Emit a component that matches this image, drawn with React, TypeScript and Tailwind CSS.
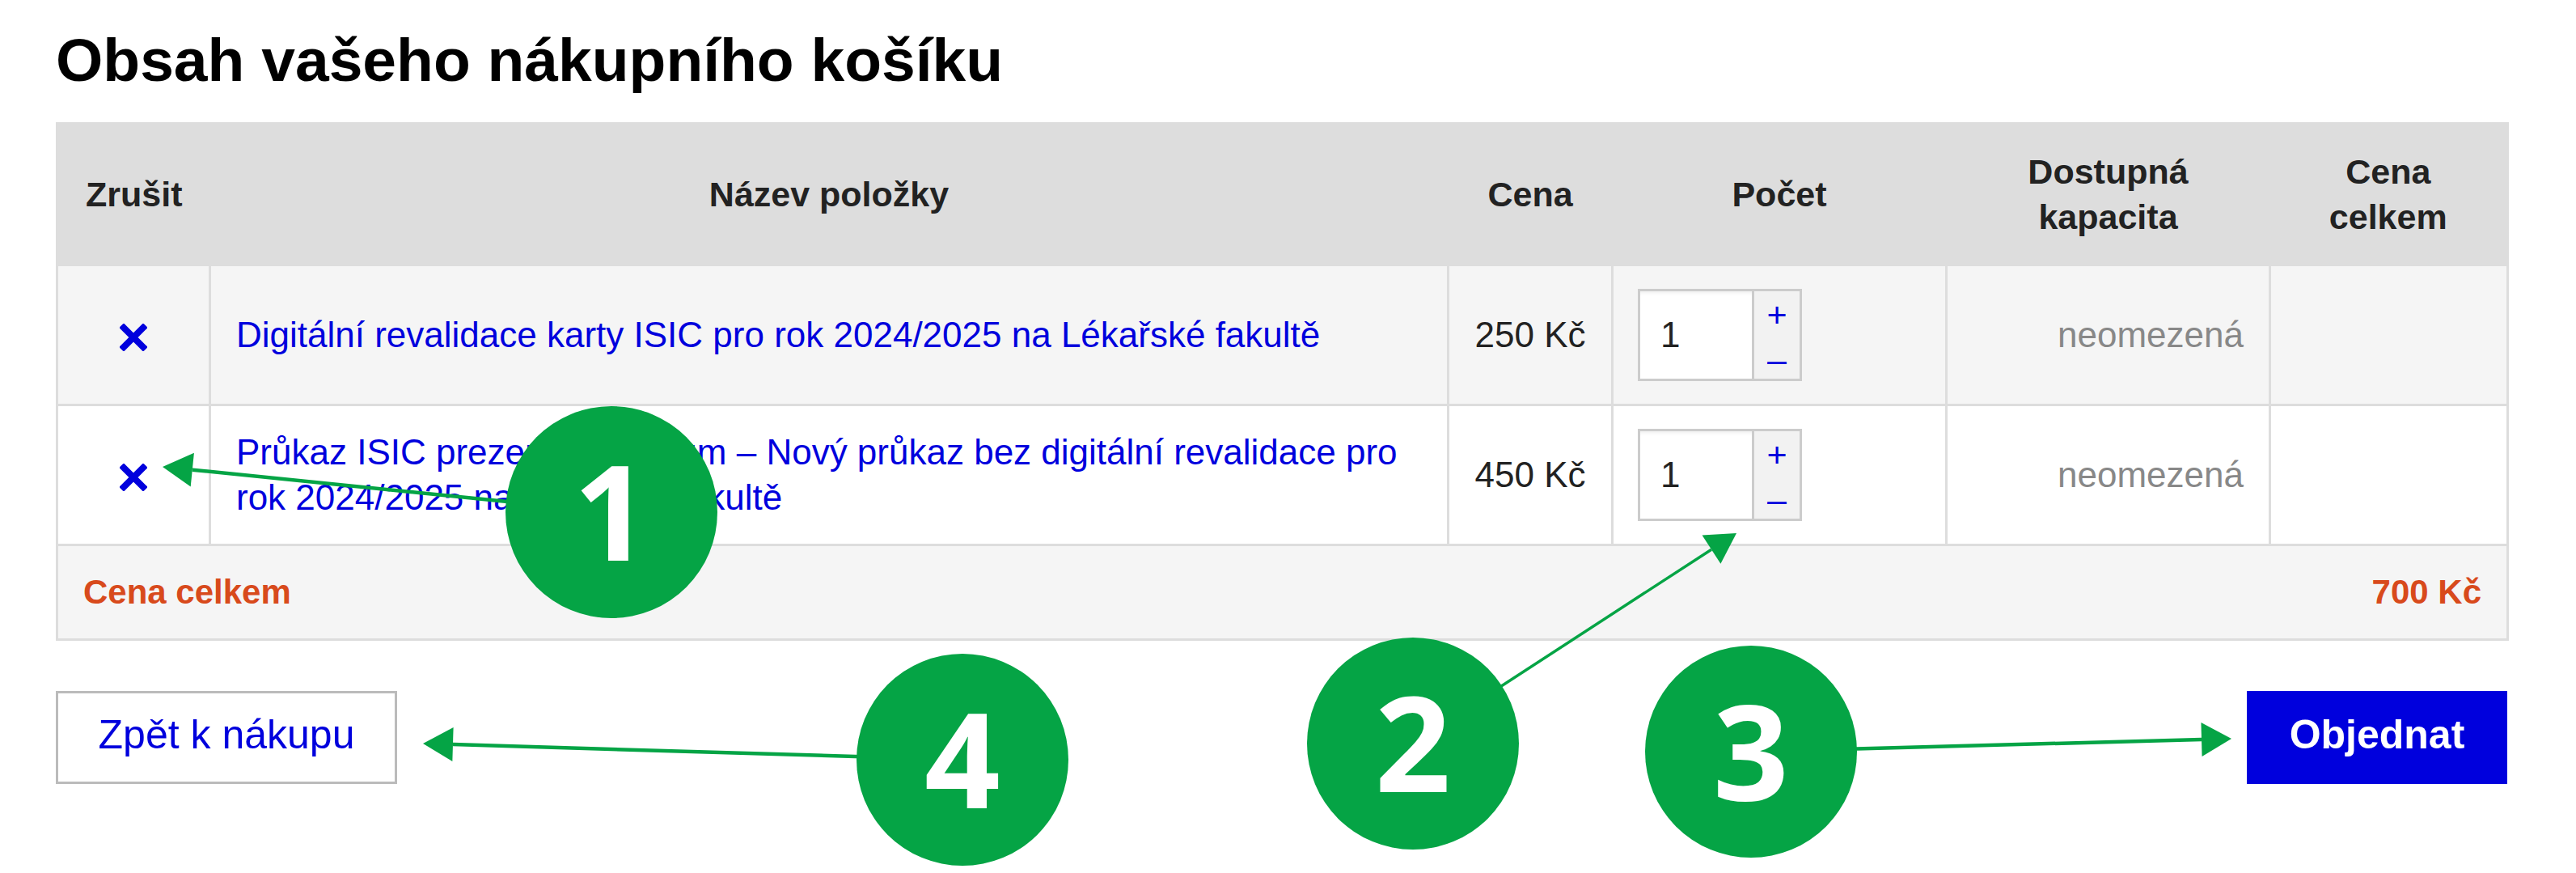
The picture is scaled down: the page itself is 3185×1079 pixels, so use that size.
import type { ReactNode } from 'react'

type Item = { name: string; price: string; qty: number; capacity: string }

const ITEMS: Item[] = [
  { name: 'Digitální revalidace karty ISIC pro rok 2024/2025 na Lékařské fakultě', price: '250 Kč', qty: 1, capacity: 'neomezená' },
  { name: 'Průkaz ISIC prezenční studium – Nový průkaz bez digitální revalidace pro rok 2024/2025 na Lékařské fakultě', price: '450 Kč', qty: 1, capacity: 'neomezená' },
]

// annotation markers: circle centre + arrow tip
const MARKS = [
  { n: '1', cx: 756, cy: 633, tx: 201, ty: 577, w: 4.5 },
  { n: '2', cx: 1747, cy: 919, tx: 2147, ty: 659, w: 3.5 },
  { n: '3', cx: 2165, cy: 929, tx: 2759, ty: 913, w: 4.5 },
  { n: '4', cx: 1190, cy: 939, tx: 523, ty: 919, w: 4.5 },
]

function arrow(x1: number, y1: number, x2: number, y2: number) {
  const len = 37, half = 21
  const dx = x2 - x1, dy = y2 - y1
  const d = Math.hypot(dx, dy)
  const ux = dx / d, uy = dy / d
  const bx = x2 - ux * len, by = y2 - uy * len
  return {
    base: [bx, by],
    head: `${x2},${y2} ${bx - uy * half},${by + ux * half} ${bx + uy * half},${by - ux * half}`,
  }
}

function RemoveIcon() {
  return (
    <svg width="34" height="34" viewBox="0 0 34 34" className="inline-block">
      <path d="M5 5 L29 29 M29 5 L5 29" stroke="#0000dd" strokeWidth="8" strokeLinecap="square" />
    </svg>
  )
}

function QtyInput({ value }: { value: number }) {
  return (
    <div className="flex h-[114px] w-[203px] border-[3px] border-[#cccccc] bg-white">
      <div className="flex flex-1 items-center pl-[25px] text-[#222] shadow-[inset_0_7px_5px_-5px_rgba(0,0,0,0.07)]">{value}</div>
      <div className="flex w-[59px] flex-col items-center border-l-[3px] border-[#cccccc] bg-[#f2f2f2] text-[43px] leading-none text-[#0000dd]">
        <span className="mt-[8px]">+</span>
        <span className="mt-[12px]">–</span>
      </div>
    </div>
  )
}

function Th({ children }: { children: ReactNode }) {
  return <th className="px-[20px] text-center align-middle font-bold">{children}</th>
}

export default function App() {
  return (
    <div className="relative min-h-[1079px] w-full bg-white font-['Liberation_Sans',Arial,sans-serif]">
      <div className="pl-[69px] pt-[31px]">
        <h1 className="text-[75px] font-bold leading-[86px] text-black">Obsah vašeho nákupního košíku</h1>

        <table className="mt-[34px] w-[3030px] table-fixed border-collapse border-[3px] border-[#dddddd] text-[44px] leading-[56px]">
          <colgroup>
            <col className="w-[189px]" />
            <col className="w-[1531px]" />
            <col className="w-[203px]" />
            <col className="w-[413px]" />
            <col className="w-[400px]" />
            <col className="w-[294px]" />
          </colgroup>
          <thead>
            <tr className="h-[175px] bg-[#dddddd] text-[43px] text-[#222]">
              <Th>Zrušit</Th>
              <Th>Název položky</Th>
              <Th>Cena</Th>
              <Th>Počet</Th>
              <Th>Dostupná<br />kapacita</Th>
              <Th>Cena<br />celkem</Th>
            </tr>
          </thead>
          <tbody>
            {ITEMS.map((it, i) => (
              <tr key={i} className={`h-[173px] ${i % 2 === 0 ? 'bg-[#f5f5f5]' : 'bg-white'}`}>
                <td className="border-[3px] border-[#dddddd] text-center align-middle"><RemoveIcon /></td>
                <td className="border-[3px] border-[#dddddd] px-[31px] align-middle text-[#0000dd]">{it.name}</td>
                <td className="border-[3px] border-[#dddddd] text-center align-middle text-[#222]">{it.price}</td>
                <td className="border-[3px] border-[#dddddd] pl-[30px] align-middle"><QtyInput value={it.qty} /></td>
                <td className="border-[3px] border-[#dddddd] pr-[31px] text-right align-middle text-[#888]">{it.capacity}</td>
                <td className="border-[3px] border-[#dddddd]" />
              </tr>
            ))}
            <tr className="h-[117px] bg-[#f5f5f5]">
              <td colSpan={6} className="border-[3px] border-[#dddddd] px-[31px] align-middle">
                <div className="flex justify-between text-[42px] font-bold text-[#d84a1c]">
                  <span>Cena celkem</span>
                  <span>700 Kč</span>
                </div>
              </td>
            </tr>
          </tbody>
        </table>

        <div className="mt-[62px] flex w-[3031px] items-start justify-between">
          <button className="flex h-[115px] w-[422px] items-center justify-center border-[3px] border-[#bbbbbb] bg-white pb-[6px] text-[50px] text-[#0000dd]">
            Zpět k nákupu
          </button>
          <button className="flex h-[115px] w-[322px] items-center justify-center bg-[#0000dd] pb-[6px] text-[50px] font-bold text-white">
            Objednat
          </button>
        </div>
      </div>

      {/* annotation overlay */}
      <div className="pointer-events-none absolute left-0 top-0 h-[1079px] w-[3185px]">
        <svg width="3185" height="1079" className="absolute left-0 top-0">
          {MARKS.map((m) => {
            const a = arrow(m.cx, m.cy, m.tx, m.ty)
            return (
              <g key={m.n} fill="#05a445" stroke="#05a445">
                <line x1={m.cx} y1={m.cy} x2={a.base[0]} y2={a.base[1]} strokeWidth={m.w} />
                <polygon points={a.head} stroke="none" />
              </g>
            )
          })}
        </svg>
        {MARKS.map((m) => (
          <div
            key={m.n}
            className="absolute flex h-[262px] w-[262px] -translate-x-1/2 -translate-y-1/2 items-center justify-center rounded-full bg-[#05a445] font-['Open_Sans',sans-serif] text-[164px] font-bold leading-none text-white"
            style={{ left: m.cx, top: m.cy }}
          >
            <span className="pb-[6px]">{m.n}</span>
          </div>
        ))}
      </div>
    </div>
  )
}
